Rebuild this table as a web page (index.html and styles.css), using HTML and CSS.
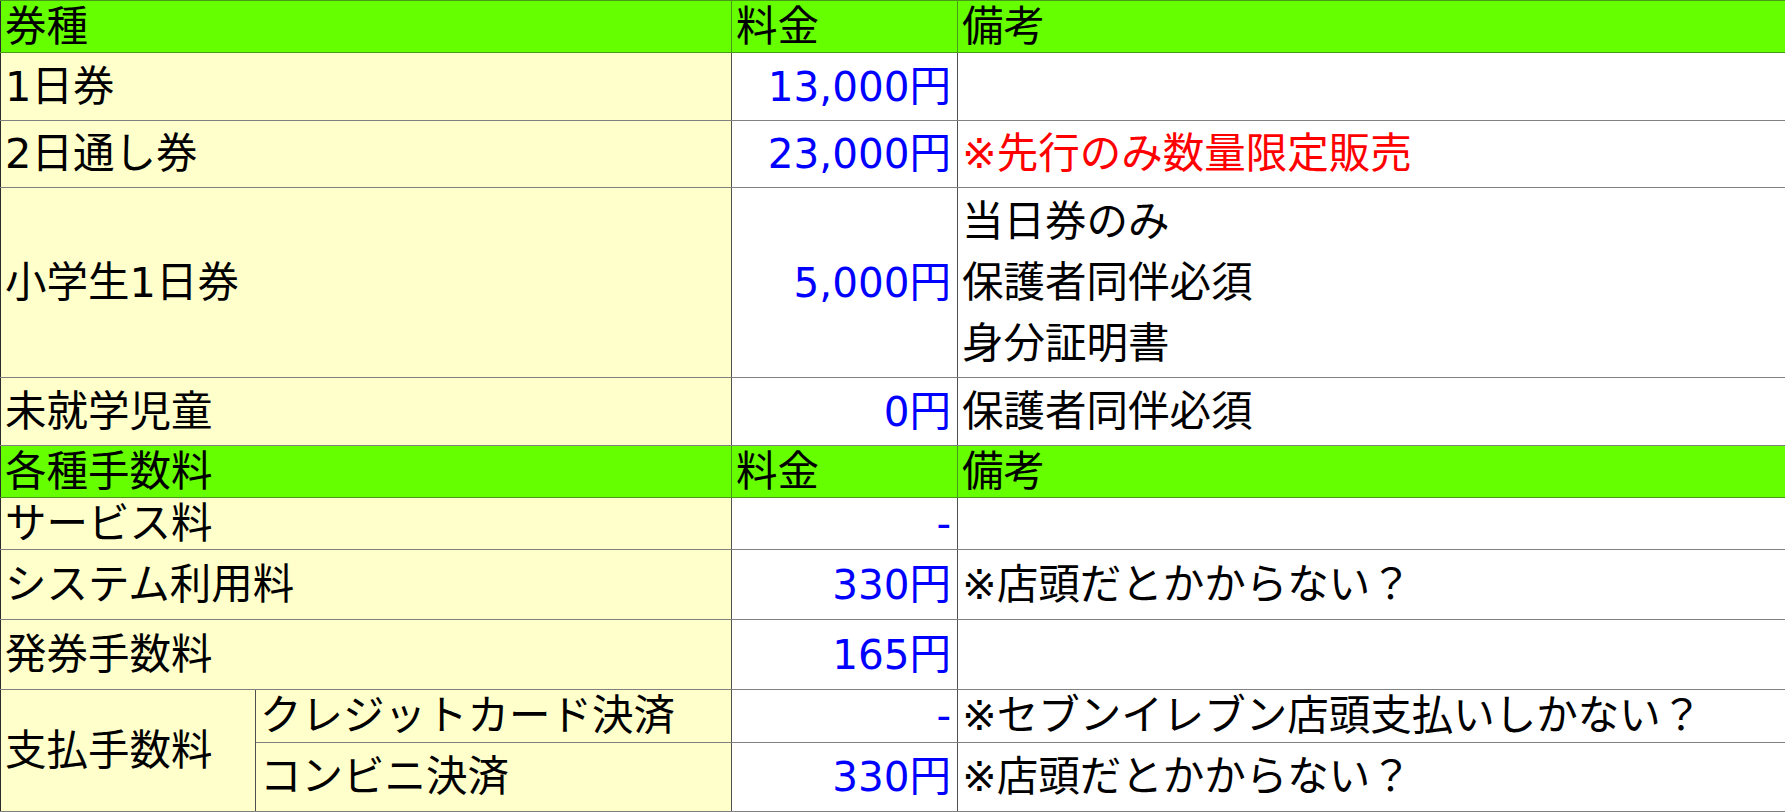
FILE: index.html
```html
<!DOCTYPE html>
<html lang="ja">
<head>
<meta charset="utf-8">
<title>料金表</title>
<link rel="stylesheet" href="styles.css">
</head>
<body>
<table class="fees">
  <colgroup>
    <col class="c-a">
    <col class="c-b">
    <col class="c-price">
    <col class="c-note">
  </colgroup>
  <tbody>
    <tr class="head h52">
      <td colspan="2">券種</td>
      <td>料金</td>
      <td>備考</td>
    </tr>
    <tr class="h68">
      <td class="label" colspan="2">1日券</td>
      <td class="price"><span class="num">13,000</span>円</td>
      <td class="note"></td>
    </tr>
    <tr class="h67">
      <td class="label" colspan="2">2日通し券</td>
      <td class="price"><span class="num">23,000</span>円</td>
      <td class="note red">※先行のみ数量限定販売</td>
    </tr>
    <tr class="h190">
      <td class="label" colspan="2">小学生1日券</td>
      <td class="price"><span class="num">5,000</span>円</td>
      <td class="note multi">当日券のみ<br>保護者同伴必須<br>身分証明書</td>
    </tr>
    <tr class="h68">
      <td class="label" colspan="2">未就学児童</td>
      <td class="price"><span class="num">0</span>円</td>
      <td class="note">保護者同伴必須</td>
    </tr>
    <tr class="head h52">
      <td colspan="2">各種手数料</td>
      <td>料金</td>
      <td>備考</td>
    </tr>
    <tr class="h52">
      <td class="label" colspan="2">サービス料</td>
      <td class="price"><span class="num">-</span></td>
      <td class="note"></td>
    </tr>
    <tr class="h70">
      <td class="label" colspan="2">システム利用料</td>
      <td class="price"><span class="num">330</span>円</td>
      <td class="note">※店頭だとかからない？</td>
    </tr>
    <tr class="h70">
      <td class="label" colspan="2">発券手数料</td>
      <td class="price"><span class="num">165</span>円</td>
      <td class="note"></td>
    </tr>
    <tr class="h53">
      <td class="label" rowspan="2">支払手数料</td>
      <td class="label">クレジットカード決済</td>
      <td class="price"><span class="num">-</span></td>
      <td class="note">※セブンイレブン店頭支払いしかない？</td>
    </tr>
    <tr class="h69">
      <td class="label">コンビニ決済</td>
      <td class="price"><span class="num">330</span>円</td>
      <td class="note">※店頭だとかからない？</td>
    </tr>
  </tbody>
</table>
</body>
</html>
```

FILE: styles.css
```css
html, body {
  margin: 0;
  padding: 0;
  background: #ffffff;
}

.fees {
  border-collapse: collapse;
  table-layout: fixed;
  width: 1785px;
  font-family: "DejaVu Sans", "Noto Sans CJK JP", sans-serif;
  font-size: 41.5px;
  line-height: 48px;
  color: #000000;
  border: 1px solid #2b2b2b;
}

.c-a { width: 255px; }
.c-b { width: 476px; }
.c-price { width: 226px; }
.c-note { width: 828px; }

.fees td {
  padding: 0 6px 0 4px;
  border: 1px solid #808080;
  vertical-align: middle;
  white-space: nowrap;
  overflow: hidden;
  background: #ffffff;
}

.fees tr td:first-child { border-left-color: #2b2b2b; }
.fees tr td:last-child { border-right-color: #2b2b2b; }

.fees td.label,
.fees td.price { border-right-color: #505050; }
.fees td.label { background: #ffffcc; }

.fees tr.head td {
  background: #66ff00;
  border-color: #4a9a1a;
  border-left-color: #505050;
}
.fees tr.head td:first-child { border-left-color: #2b2b2b; }
.fees tr.head td:last-child { border-right-color: #2b2b2b; }

.price {
  text-align: right;
  color: #0000ff;
}

.num { font-size: 40.5px; }

.note { text-align: left; }
.red { color: #ff0000; }
.multi { line-height: 61px; }

.h52 { height: 52px; }
.h53 { height: 53px; }
.h67 { height: 67px; }
.h68 { height: 68px; }
.h69 { height: 69px; }
.h70 { height: 70px; }
.h190 { height: 190px; }
```
